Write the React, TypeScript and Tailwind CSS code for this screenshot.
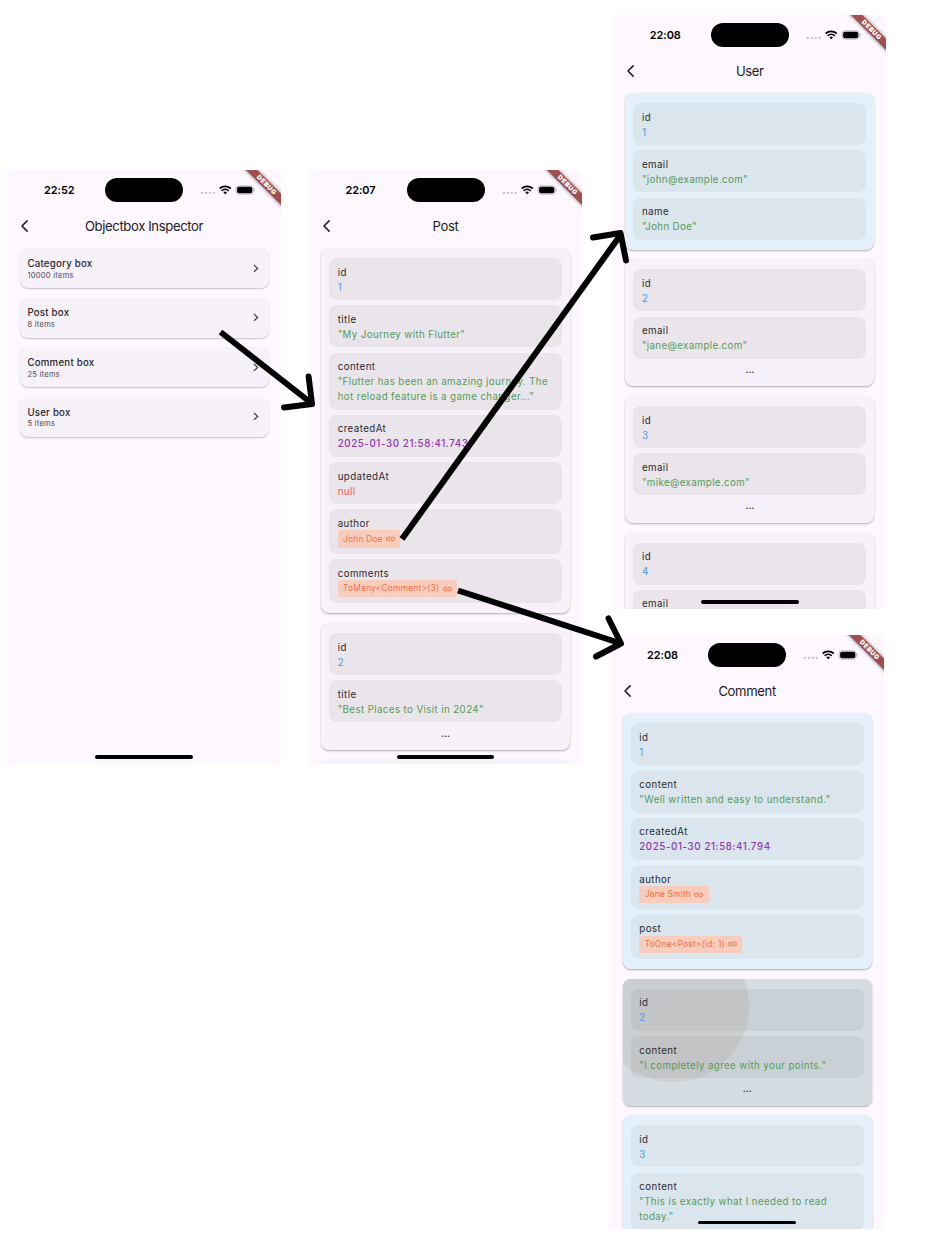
import React from "react";

type Kind = "num" | "str" | "mail" | "date" | "nil" | "link";
type FieldData = { label: string; value: string; kind: Kind };
type CardData = { fields: FieldData[]; more?: boolean; blue?: boolean; pressed?: boolean };

const tone: Record<Kind, string> = {
  num: "text-[#4a98ea] tracking-[0.4px]",
  str: "text-[#559b59] tracking-[0.4px]",
  mail: "text-[#559b59] tracking-[0.36px]",
  date: "text-[#9136ae] font-medium tracking-[0.61px]",
  nil: "text-[#ee5a52] tracking-[0.4px]",
  link: "",
};

const f = (label: string, value: string, kind: Kind): FieldData => ({ label, value, kind });

function LinkIcon() {
  return (
    <svg className="ml-[3.4px]" width="9" height="6" viewBox="0 0 9 6" fill="none" stroke="currentColor" strokeWidth="0.95">
      <path d="M4 1.2 H2.3 a1.8 1.8 0 0 0 0 3.6 H4" />
      <path d="M5 1.2 H6.7 a1.8 1.8 0 0 1 0 3.6 H5" />
      <path d="M2.8 3 H6.2" />
    </svg>
  );
}

function StatusBar({ time }: { time: string }) {
  return (
    <div className="flex h-[40px] shrink-0 items-center">
      <div className="w-[98px] pl-[36.6px] pt-px text-[10.9px] font-semibold leading-none tracking-[-0.05px] text-black">{time}</div>
      <div className="h-[23.4px] w-[78px] rounded-full bg-black" />
      <svg className="ml-[17px]" width="56" height="12" viewBox="0 0 56 12">
        <g fill="#c4bfc7">
          <circle cx="1.8" cy="8.9" r="1.15" />
          <circle cx="5.8" cy="8.9" r="1.15" />
          <circle cx="9.8" cy="8.9" r="1.15" />
          <circle cx="13.7" cy="8.9" r="1.15" />
        </g>
        <g fill="none" stroke="#000" strokeWidth="1.7">
          <path d="M19.7 4.5 A8.2 8.2 0 0 1 30.7 4.5" />
          <path d="M21.7 6.8 A5.2 5.2 0 0 1 28.7 6.8" />
        </g>
        <path d="M23.4 8.4 A2.7 2.7 0 0 1 27 8.4 L25.2 10.3 Z" fill="#000" />
        <rect x="36.2" y="1.9" width="17" height="8.2" rx="2.7" fill="none" stroke="#a9a5aa" strokeWidth="0.8" />
        <rect x="37.1" y="2.8" width="15.2" height="6.4" rx="1.9" fill="#000" />
        <path d="M54.1 4.6 a1.6 1.6 0 0 1 0 2.8z" fill="#a9a5aa" />
      </svg>
    </div>
  );
}

function Phone({ time, title, children }: { time: string; title: string; children: React.ReactNode }) {
  return (
    <section className="relative flex h-[593.6px] w-[273.3px] flex-col overflow-hidden bg-[#fdf7ff]">
      <StatusBar time={time} />
      <header className="flex h-[32px] shrink-0 items-center pl-[13.8px] pr-[20.8px]">
        <svg width="7" height="12" viewBox="0 0 7 12" fill="none" stroke="#1d1b20" strokeWidth="1.5" strokeLinecap="round" strokeLinejoin="round">
          <path d="M6.1 0.9 L1 6 L6.1 11.1" />
        </svg>
        <h1 className="flex-1 text-center text-[13.1px] leading-[18px] tracking-[-0.37px] text-[#1d1b20]">{title}</h1>
      </header>
      <div className="flex flex-col gap-[9.75px] pl-[12.2px] pr-[12px] pt-[6.1px]">{children}</div>
      <div className="absolute right-[-16px] top-[10.6px] flex h-[8.4px] w-[61px] rotate-45 items-center justify-center bg-[#a04e4f] text-[6.5px] font-black leading-none tracking-[0.5px] text-white shadow-[0_0_4px_rgba(0,0,0,0.5)]">
        DEBUG
      </div>
      <div className="absolute bottom-[5px] left-[88px] h-[3.2px] w-[97.6px] rounded-full bg-black" />
    </section>
  );
}

function BoxRow({ name, count }: { name: string; count: string }) {
  return (
    <div className="flex h-[39.9px] items-center justify-between rounded-[8px] bg-[#f7f2fa] pl-[7.8px] pr-[10px] shadow-[0_1px_1.5px_rgba(0,0,0,0.22)]">
      <div className="flex flex-col pt-[1.2px]">
        <span className="text-[9.7px] font-medium leading-[13px] tracking-[0.22px] text-[#2b292e]">{name}</span>
        <span className="pt-[0.8px] text-[7.5px] leading-[10px] tracking-[0.29px] text-[#49454f]">{count}</span>
      </div>
      <svg width="6" height="9" viewBox="0 0 6 9" fill="none" stroke="#3c3940" strokeWidth="1.3">
        <path d="M1 0.9 L4.6 4.4 L1 7.9" />
      </svg>
    </div>
  );
}

function Field({ label, value, kind, fill }: FieldData & { fill: string }) {
  return (
    <div className={`relative rounded-[8px] px-[8.6px] py-[6px] ${fill}`}>
      <div className="-mb-[0.6px] pt-[0.6px] text-[9.73px] leading-[15px] tracking-[0.43px] text-[#2b292e]">{label}</div>
      {kind === "link" ? (
        <div className="flex">
          <span className="flex h-[17.3px] items-center rounded-[2px] bg-[#f9cdbe] pl-[5.4px] pr-[5.1px] text-[8.4px] tracking-[0.23px] text-[#ef7342]">
            {value}
            <LinkIcon />
          </span>
        </div>
      ) : (
        <div className={`-mb-[0.6px] min-h-[15.6px] whitespace-pre-line pt-[0.6px] text-[9.73px] leading-[15px] ${tone[kind]}`}>{value}</div>
      )}
    </div>
  );
}

function RecordCard({ fields, more, blue, pressed }: CardData) {
  const surface = pressed ? "bg-[#d5dce2]" : blue ? "bg-[#e4f1fb]" : "bg-[#f7f2fa]";
  const fill = pressed ? "bg-[#1d1b20]/6" : blue ? "bg-[#dae5ee]" : "bg-[#e9e5eb]";
  return (
    <article className={`relative flex flex-col gap-[5.27px] overflow-hidden rounded-[8px] px-[8px] py-[10px] shadow-[0_1px_2px_rgba(0,0,0,0.3)] ${surface}`}>
      {pressed && <div className="absolute left-[-26px] top-[-49px] size-[152px] rounded-full bg-[#cccfd1]" />}
      {fields.map((d) => (
        <Field key={d.label} {...d} fill={fill} />
      ))}
      {more && (
        <div className="relative h-[12.3px] text-center text-[9.73px] font-medium leading-[12.2px] text-[#2b292e]">...</div>
      )}
    </article>
  );
}

const posts: CardData[] = [
  {
    fields: [
      f("id", "1", "num"),
      f("title", '"My Journey with Flutter"', "str"),
      f("content", '"Flutter has been an amazing journey. The\nhot reload feature is a game changer..."', "str"),
      f("createdAt", "2025-01-30 21:58:41.743", "date"),
      f("updatedAt", "null", "nil"),
      f("author", "John Doe", "link"),
      f("comments", "ToMany<Comment>(3)", "link"),
    ],
  },
  { fields: [f("id", "2", "num"), f("title", '"Best Places to Visit in 2024"', "str")], more: true },
  { fields: [] },
];

const users: CardData[] = [
  { blue: true, fields: [f("id", "1", "num"), f("email", '"john@example.com"', "mail"), f("name", '"John Doe"', "mail")] },
  { more: true, fields: [f("id", "2", "num"), f("email", '"jane@example.com"', "mail")] },
  { more: true, fields: [f("id", "3", "num"), f("email", '"mike@example.com"', "mail")] },
  { fields: [f("id", "4", "num"), f("email", "", "mail")] },
];

const comments: CardData[] = [
  {
    blue: true,
    fields: [
      f("id", "1", "num"),
      f("content", '"Well written and easy to understand."', "str"),
      f("createdAt", "2025-01-30 21:58:41.794", "date"),
      f("author", "Jane Smith", "link"),
      f("post", "ToOne<Post>(id: 1)", "link"),
    ],
  },
  { blue: true, more: true, pressed: true, fields: [f("id", "2", "num"), f("content", '"I completely agree with your points."', "str")] },
  { blue: true, fields: [f("id", "3", "num"), f("content", '"This is exactly what I needed to read\ntoday."', "str")] },
];

export default function App() {
  return (
    <main className="relative flex h-[1248px] w-[926px] items-start overflow-hidden bg-white pl-[7.4px] font-['Inter','Liberation_Sans',sans-serif]">
      <div className="pt-[170px]">
        <Phone time="22:52" title="Objectbox Inspector">
          <BoxRow name="Category box" count="10000 items" />
          <BoxRow name="Post box" count="8 items" />
          <BoxRow name="Comment box" count="25 items" />
          <BoxRow name="User box" count="5 items" />
        </Phone>
      </div>
      <div className="ml-[28.2px] pt-[170px]">
        <Phone time="22:07" title="Post">
          {posts.map((c, i) => <RecordCard key={i} {...c} />)}
        </Phone>
      </div>
      <div className="ml-[28.3px] flex flex-col gap-[26.6px] pt-[15px]">
        <div className="pl-[2.7px]">
          <Phone time="22:08" title="User">
            {users.map((c, i) => <RecordCard key={i} {...c} />)}
          </Phone>
        </div>
        <Phone time="22:08" title="Comment">
          {comments.map((c, i) => <RecordCard key={i} {...c} />)}
        </Phone>
      </div>
      <svg className="pointer-events-none absolute inset-0" width="926" height="1248" viewBox="0 0 926 1248" fill="none" stroke="#000" strokeWidth="6">
        <path d="M220.5 332 L312.5 404" />
        <path d="M402 539 L620.5 235" />
        <path d="M458 590.5 L621 643.5" />
        <g strokeLinecap="round" strokeLinejoin="round">
          <path d="M308.6 376.5 L312 404 L284 407.5" />
          <path d="M593 237.5 L620.5 233 L626 260.5" />
          <path d="M608.5 618.5 L621 643.5 L596 656.5" />
        </g>
      </svg>
    </main>
  );
}
